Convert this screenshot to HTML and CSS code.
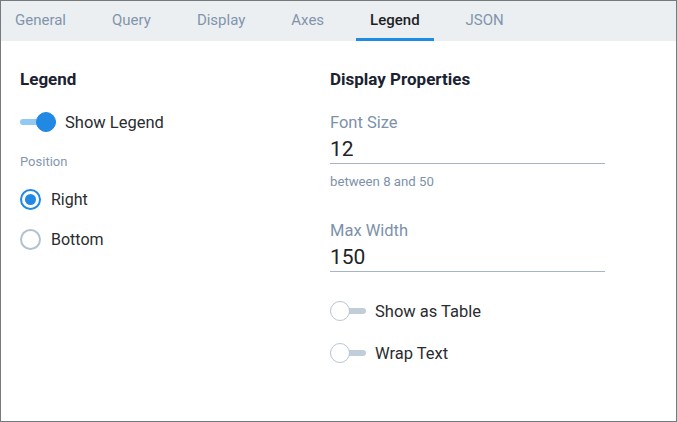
FILE: index.html
```html
<!DOCTYPE html>
<html>
<head>
<meta charset="utf-8">
<link rel="stylesheet" href="styles.css">
</head>
<body>
<div class="panel">
  <nav class="tabs">
    <span class="tab">General</span>
    <span class="tab">Query</span>
    <span class="tab">Display</span>
    <span class="tab">Axes</span>
    <span class="tab active">Legend</span>
    <span class="tab">JSON</span>
  </nav>
  <div class="content">
    <section class="col">
      <h2 class="heading">Legend</h2>
      <div class="switch-row first">
        <span class="switch on"><span class="track"></span><span class="knob"></span></span>
        <span class="row-text">Show Legend</span>
      </div>
      <div class="group-label">Position</div>
      <div class="radio-row first-radio">
        <span class="radio checked"></span>
        <span class="row-text radio-text">Right</span>
      </div>
      <div class="radio-row">
        <span class="radio"></span>
        <span class="row-text radio-text">Bottom</span>
      </div>
    </section>
    <section class="col">
      <h2 class="heading">Display Properties</h2>
      <div class="field first-field">
        <div class="field-label">Font Size</div>
        <div class="field-input">12</div>
        <div class="helper">between 8 and 50</div>
      </div>
      <div class="field second-field">
        <div class="field-label">Max Width</div>
        <div class="field-input">150</div>
      </div>
      <div class="switch-row table-row">
        <span class="switch"><span class="track"></span><span class="knob"></span></span>
        <span class="row-text">Show as Table</span>
      </div>
      <div class="switch-row wrap-row">
        <span class="switch"><span class="track"></span><span class="knob"></span></span>
        <span class="row-text">Wrap Text</span>
      </div>
    </section>
  </div>
</div>
</body>
</html>
```
FILE: styles.css
```css
html, body {
  margin: 0;
  padding: 0;
  background: #ffffff;
}
body {
  font-family: Roboto, "Liberation Sans", sans-serif;
}
.panel {
  width: 677px;
  height: 422px;
  box-sizing: border-box;
  border: 1px solid #777a7d;
  background: #ffffff;
}
.tabs {
  display: flex;
  height: 40px;
  background: #eceff1;
  column-gap: 18px;
}
.tab {
  box-sizing: border-box;
  height: 40px;
  padding: 0 14px;
  font-size: 15px;
  line-height: 38px;
  color: #8194ac;
  border-bottom: 3px solid transparent;
}
.tab.active {
  color: #1b1f24;
  font-weight: 500;
  border-bottom-color: #1e8ce3;
}
.content {
  display: grid;
  grid-template-columns: 310px 1fr;
  padding: 28px 20px 0 19px;
}
.col {
  display: flex;
  flex-direction: column;
  align-items: flex-start;
}
.heading {
  margin: 0;
  font-size: 17px;
  line-height: 20px;
  font-weight: 700;
  color: #1a2230;
}
.row-text {
  font-size: 16.5px;
  color: #2a2c2f;
}
.radio-text {
  font-size: 16px;
}
.switch-row, .radio-row {
  display: flex;
  align-items: center;
  height: 24px;
}
.switch-row.first { margin-top: 21px; }
.switch {
  position: relative;
  width: 36px;
  height: 20px;
  margin-right: 9px;
  flex: none;
}
.track {
  position: absolute;
  left: 0;
  right: 0;
  top: 7px;
  height: 6px;
  border-radius: 3px;
  background: #c1cdd8;
}
.knob {
  position: absolute;
  top: 0;
  left: 0;
  width: 20px;
  height: 20px;
  box-sizing: border-box;
  border-radius: 50%;
  background: #ffffff;
  border: 1px solid #b9c6d4;
}
.switch.on .track {
  background: #90c9f3;
}
.switch.on .knob {
  left: auto;
  right: 0;
  background: #2189e3;
  border-color: #2189e3;
}
.group-label {
  margin-top: 20px;
  font-size: 13px;
  line-height: 16px;
  color: #8497af;
}
.radio-row { margin-top: 16px; }
.radio-row.first-radio { margin-top: 17px; }
.radio {
  width: 21px;
  height: 21px;
  box-sizing: border-box;
  border-radius: 50%;
  border: 2px solid #b3c1ce;
  margin-right: 10px;
  flex: none;
  display: flex;
  align-items: center;
  justify-content: center;
}
.radio.checked {
  border-color: #2189e3;
}
.radio.checked::after {
  content: "";
  width: 11px;
  height: 11px;
  border-radius: 50%;
  background: #2189e3;
}
.field {
  width: 275px;
}
.first-field { margin-top: 25px; }
.second-field { margin-top: 32px; }
.field-label {
  font-size: 16.5px;
  line-height: 18px;
  color: #7d91aa;
}
.field-input {
  margin-top: 5px;
  font-size: 21px;
  line-height: 24px;
  color: #1e2329;
  padding-bottom: 2px;
  border-bottom: 1px solid #a6b5c5;
}
.helper {
  margin-top: 10px;
  font-size: 13.2px;
  line-height: 16px;
  color: #7d91aa;
}
.table-row { margin-top: 27px; }
.wrap-row { margin-top: 18px; }
```
